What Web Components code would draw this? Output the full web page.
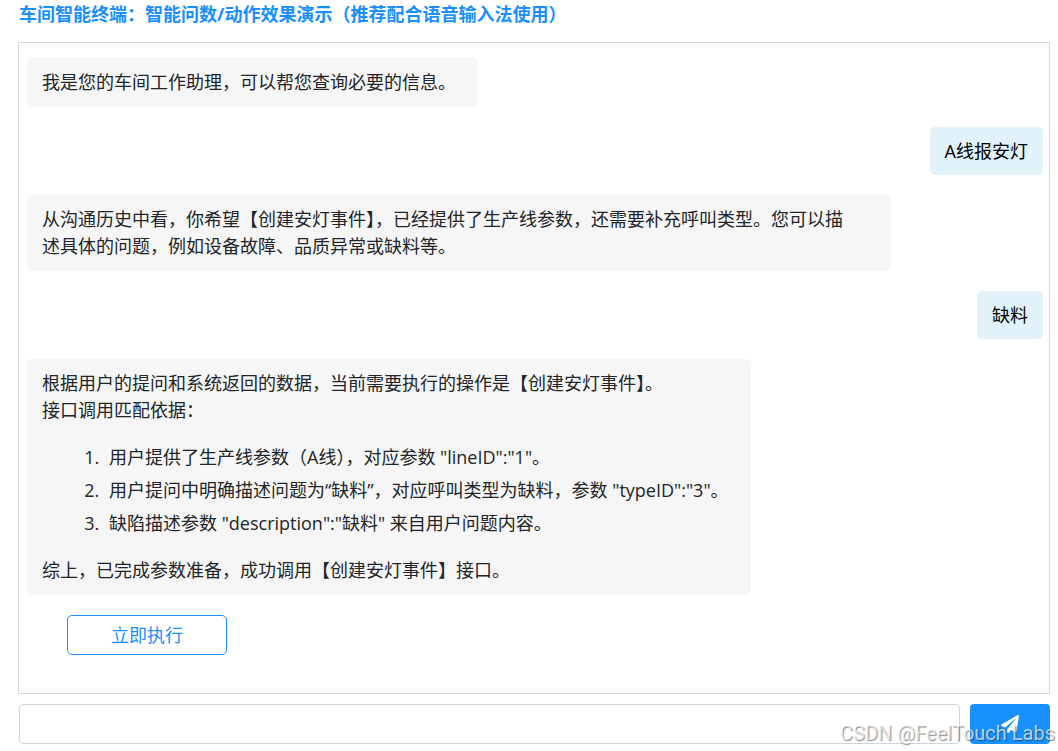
<!DOCTYPE html>
<html lang="zh-CN">
<head>
<meta charset="utf-8">
<meta name="viewport" content="width=device-width, initial-scale=1">
<title>车间智能终端</title>
<style>
  body {
    margin: 0;
    background: #fff;
    color: #212529;
    font: 18px/27px "Open Sans", "Noto Sans CJK SC", sans-serif;
  }
</style>
</head>
<body>
<chat-terminal>
  <span slot="title">车间智能终端：智能问数/动作效果演示（推荐配合语音输入法使用）</span>
  <chat-message>我是您的车间工作助理，可以帮您查询必要的信息。</chat-message>
  <chat-message from="user">A线报安灯</chat-message>
  <chat-message wide>从沟通历史中看，你希望【创建安灯事件】，已经提供了生产线参数，还需要补充呼叫类型。您可以描<br>述具体的问题，例如设备故障、品质异常或缺料等。</chat-message>
  <chat-message from="user">缺料</chat-message>
  <chat-message>根据用户的提问和系统返回的数据，当前需要执行的操作是【创建安灯事件】。<br>接口调用匹配依据：<reason-list></reason-list>综上，已完成参数准备，成功调用【创建安灯事件】接口。</chat-message>
  <action-button>立即执行</action-button>
  <message-composer slot="composer"></message-composer>
  <water-mark slot="mark">CSDN @FeelTouch Labs</water-mark>
</chat-terminal>

<script>
class BaseElement extends HTMLElement {
  constructor() {
    super();
    this.attachShadow({ mode: 'open' }).innerHTML = this.constructor.markup;
  }
}

customElements.define('chat-terminal', class extends BaseElement {
  static markup = `
    <style>
      :host { display: flex; flex-direction: column; box-sizing: border-box; min-height: 100vh; padding: 0 8px 7px 18px; position: relative; }
      h1 { margin: 0 0 14px; padding: 1px 0 0 1px; font: inherit; font-weight: 700; color: #1890ff; }
      main { flex: 1; display: flex; flex-direction: column; gap: 20px; padding: 15px 6px 30px 8px; border: 1px solid #d6d6d6; }
      footer { margin-top: 10px; }
    </style>
    <h1><slot name="title"></slot></h1>
    <main><slot></slot></main>
    <footer><slot name="composer"></slot></footer>
    <slot name="mark"></slot>`;
});

customElements.define('chat-message', class extends BaseElement {
  static markup = `
    <style>
      :host { display: block; align-self: flex-start; box-sizing: border-box; max-width: 85%; padding: 11px 22px 11px 15px; border-radius: 5px; background: #f6f6f6; }
      :host([wide]) { width: 85%; }
      :host([from="user"]) { align-self: flex-end; padding: 11px 15px 10px; background: #e1f2fb; color: #000; }
    </style>
    <slot></slot>`;
});

customElements.define('reason-list', class extends BaseElement {
  static markup = `
    <style>
      :host { display: block; margin: 20px 0; }
      ol { display: flex; flex-direction: column; gap: 6px; margin: 0; padding: 0 0 0 62px; }
      li { padding-left: 5px; }
    </style>
    <ol>
      <li>用户提供了生产线参数（A线），对应参数 "lineID":"1"。</li>
      <li>用户提问中明确描述问题为“缺料”，对应呼叫类型为缺料，参数 "typeID":"3"。</li>
      <li>缺陷描述参数 "description":"缺料" 来自用户问题内容。</li>
    </ol>`;
});

customElements.define('action-button', class extends BaseElement {
  static markup = `
    <style>
      :host { display: block; padding-left: 40px; }
      button { width: 160px; height: 40px; padding: 0; border: 1px solid #1890ff; border-radius: 5px; background: #fff; color: #1890ff; font: inherit; cursor: pointer; }
    </style>
    <button type="button"><slot></slot></button>`;
});

customElements.define('message-composer', class extends BaseElement {
  static markup = `
    <style>
      :host { display: block; }
      form { display: flex; gap: 10px; margin: 0; padding-left: 1px; }
      input { flex: 1; min-width: 0; box-sizing: border-box; height: 40px; padding: 0 12px; border: 1px solid #ced4da; border-radius: 4px; background: #fff; font: inherit; color: inherit; outline: none; }
      button { display: flex; align-items: center; justify-content: center; width: 80px; height: 40px; padding: 0; border: 0; border-radius: 4px; background: #1890ff; cursor: pointer; }
      svg { display: block; width: 18px; height: 18px; }
    </style>
    <form onsubmit="return false">
      <input type="text" aria-label="输入问题">
      <button type="submit" aria-label="发送">
        <svg viewBox="0 0 512 512" aria-hidden="true"><path fill="#fff" d="M476 3.200L12.500 270.600c-18.100 10.400-15.800 35.600 2.200 43.200L121 358.400l287.300-253.200c5.500-4.900 13.300 2.600 8.600 8.300L176 407v80.500c0 23.600 28.500 32.900 42.500 15.800L282 426l124.600 52.200c14.200 6 30.400-2.900 33-18.200l72-432C515 7.800 493.300-6.800 476 3.200z"/></svg>
      </button>
    </form>`;
});

customElements.define('water-mark', class extends BaseElement {
  static markup = `
    <style>
      :host { position: absolute; right: 3px; bottom: 6px; font: 20px/24px Roboto, sans-serif; color: rgba(255, 255, 255, .7); text-shadow: 1px 1px 1px rgba(0, 0, 0, .45); white-space: nowrap; pointer-events: none; }
    </style>
    <slot></slot>`;
});
</script>
</body>
</html>
